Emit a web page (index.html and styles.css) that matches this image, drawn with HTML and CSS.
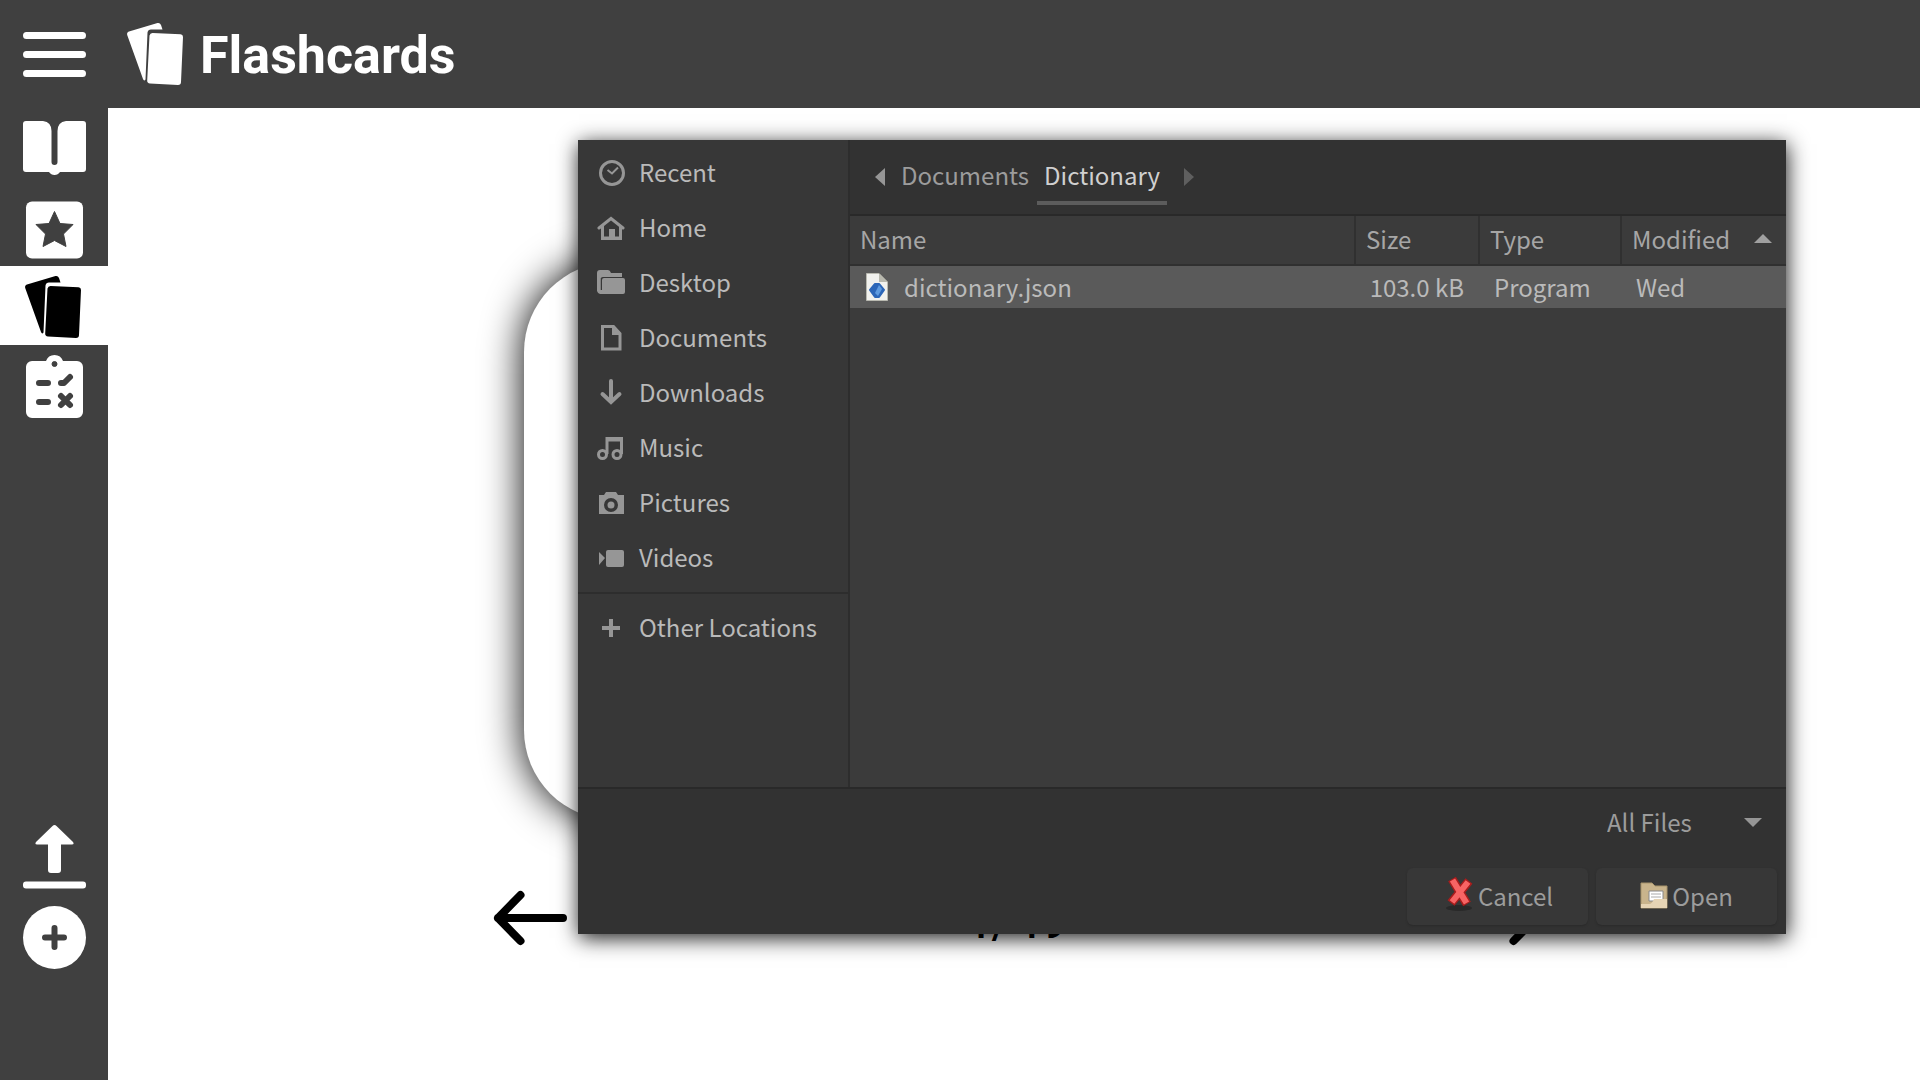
FILE: index.html
```html
<!DOCTYPE html>
<html lang="en">
<head>
<meta charset="utf-8">
<title>Flashcards</title>
<link rel="stylesheet" href="styles.css">
</head>
<body>
<svg class="sprite" aria-hidden="true">
  <symbol id="cards" viewBox="0 0 60 66">
    <path d="M4 10.5 32.500 2Q35 1.500 36 4L37.500 8.500H26Q23 8.500 22.500 11.500L20.500 58.500Q19 60.500 18 58L2.200 14Q1.500 11.500 4 10.500Z"/>
    <path d="M27.500 12 55.500 13.200Q58 13.500 58 16L56 61Q56 64 53 64L25 62.500Q22 62 22.200 59.500L24.500 14.500Q25 12 27.500 12Z"/>
  </symbol>
</svg>
<div class="app">
  <header class="topbar">
    <button class="menu" aria-label="Menu"><svg width="63" height="45"><path d="M3.500 3.500h56M3.500 22.500h56M3.500 41.500h56" fill="none" stroke="#fff" stroke-width="7" stroke-linecap="round"/></svg></button>
    <svg class="logo" width="60" height="66"><use href="#cards"/></svg>
    <h1>Flashcards</h1>
  </header>
  <div class="body">
    <nav class="rail">
      <button class="tool" aria-label="Dictionary"><svg width="108" height="79"><path d="M26 13H43Q51.500 14 51.500 23V54a3 3 0 0 0 6 0V23Q57.500 14 66 13H83a3 3 0 0 1 3 3V61a3 3 0 0 1-3 3H60Q58 67 54.500 67T49 64H26a3 3 0 0 1-3-3V16a3 3 0 0 1 3-3Z"/></svg></button>
      <button class="tool" aria-label="Favourites"><svg width="108" height="79"><rect x="26" y="14.500" width="57" height="57" rx="6"/><path class="cut" d="M54.500 24.500 60 36.500 73 37.500 63.500 47 66 59.500 54.500 53.500 43 59.500 45.500 47 36 37.500 49 36.500Z"/></svg></button>
      <button class="tool current" aria-label="Flashcards"><svg width="60" height="66"><use href="#cards"/></svg></button>
      <button class="tool" aria-label="Quiz"><svg width="108" height="79"><path d="M32 16H46a9 9 0 0 1 17 0H77a6 6 0 0 1 6 6V67a6 6 0 0 1-6 6H32a6 6 0 0 1-6-6V22a6 6 0 0 1 6-6Z"/><circle class="cut" cx="54.500" cy="19" r="2.500"/><path class="line" d="M39 38h9M39 57h9M61 38h3L70 32M61 51l9 9M70 51l-9 9"/></svg></button>
      <button class="tool push" aria-label="Upload"><svg width="108" height="79"><path d="M52.500 8Q54.500 6 56.500 8L73 24Q74.500 26.500 72 26.500H61V52a3 3 0 0 1-3 3H51a3 3 0 0 1-3-3V26.500H37Q34.500 26.500 36 24Z"/><rect x="23" y="63.500" width="63" height="7" rx="3"/></svg></button>
      <button class="tool" aria-label="Add"><svg width="108" height="79"><circle cx="54.500" cy="40.500" r="31.500"/><path class="line" d="M54.500 31v19M45 40.500h19"/></svg></button>
    </nav>
    <main class="stage">
      <section class="card"></section>
      <div class="pager">
        <button aria-label="Previous"><svg width="74" height="56"><path d="M70 28H5M27.500 5 5 28 27.500 51"/></svg></button>
        <p>1/ 19</p>
        <button aria-label="Next"><svg width="74" height="56"><path d="M4 28H69M46.500 5 69 28 46.500 51"/></svg></button>
      </div>
    </main>
  </div>
</div>

<div class="dialog" role="dialog" aria-label="Open file">
  <div class="browser">
    <nav class="places">
      <a href="#"><svg viewBox="0 0 28 28"><circle class="o" cx="15" cy="14" r="11.500"/><path class="o thin" d="M10.500 11l4.500 3.500 6-6"/></svg>Recent</a>
      <a href="#"><svg viewBox="0 0 28 28"><path class="o" stroke-linecap="round" d="M2 14 14 4.500 26 14"/><path d="M4 13v13h21V13l-3-2v11.500h-4V15h-6v7.500H7V11Z"/></svg>Home</a>
      <a href="#"><svg viewBox="0 0 28 28"><path d="M0 4q0-3 3-3h8q2 0 3 3h11v4H6Q3.500 8 3.500 11v10H2q-2 0-2-2Z"/><path d="M5 11q0-2 2-2h19q2 0 2 2v12q0 2-2 2H3q-2 0-3-3V10h3.500v11H5Z"/></svg>Desktop</a>
      <a href="#"><svg viewBox="0 0 28 28"><path class="o" d="M5.500 2.500h11l6.500 7v15.500H5.500Z"/><path d="M15 2v9h9Z"/></svg>Documents</a>
      <a href="#"><svg viewBox="0 0 28 28"><path class="o thick" d="M14 2V23M5.500 15l8.500 8 8.500-8" stroke-linecap="round"/></svg>Downloads</a>
      <a href="#"><svg viewBox="0 0 28 28"><path class="o" d="M10 20V4.500h14.500V20M10 6h14"/><circle class="o" cx="5.500" cy="20.500" r="4"/><circle class="o" cx="20" cy="20.500" r="4"/></svg>Music</a>
      <a href="#"><svg viewBox="0 0 28 28"><path fill-rule="evenodd" d="M2 6h5l2-3h10l2 3h6v19H2ZM14 9a7 7 0 1 0 0 14a7 7 0 0 0 0-14Z"/><circle cx="14" cy="16" r="3.500"/></svg>Pictures</a>
      <a href="#"><svg viewBox="0 0 28 28"><path d="M2 8 8 14 2 21Z"/><rect x="9" y="6" width="18" height="17" rx="2"/></svg>Videos</a>
      <hr>
      <a href="#"><svg viewBox="0 0 28 28"><path class="o thick" d="M14 5v18M5 14h18"/></svg>Other Locations</a>
    </nav>
    <section class="listing">
      <div class="path">
        <button class="step" aria-label="Back"><svg width="10" height="18"><path d="M10 0v18L0 9Z"/></svg></button>
        <a href="#">Documents</a>
        <a href="#" class="here">Dictionary</a>
        <button class="step next" aria-label="Forward"><svg width="10" height="18"><path d="M0 0v18L10 9Z"/></svg></button>
      </div>
      <table>
        <colgroup><col><col class="c-size"><col class="c-type"><col class="c-mod"></colgroup>
        <thead><tr><th>Name</th><th>Size</th><th>Type</th><th><span class="sort">Modified<svg width="18" height="9"><path d="M0 9 9 0l9 9Z"/></svg></span></th></tr></thead>
        <tbody><tr>
          <td><span class="file"><svg width="22" height="28"><path d="M.5.500H13L21.500 9v18.500H.5Z" fill="#f1f1ee" stroke="#b9b9b0"/><path d="M13 .5V9h8.500Z" fill="#b8b8ae"/><path d="m4 17 5-6h4l5 6-5 7H9Z" fill="#2c66b8" stroke="#2c66b8" stroke-width="2" stroke-linejoin="round"/><path d="m9 20 4-8 3 4-4 7Z" fill="#5f9be0"/></svg>dictionary.json</span></td>
          <td class="num">103.0 kB</td><td>Program</td><td>Wed</td>
        </tr></tbody>
      </table>
    </section>
  </div>
  <footer class="actions">
    <label class="filter"><select aria-label="File type"><option>All Files</option></select><svg width="18" height="9"><path d="M0 0h18L9 9Z"/></svg></label>
    <div class="buttons">
      <button class="cancel"><svg width="28" height="36"><ellipse cx="13" cy="32" rx="13" ry="3" fill="#292929"/><path d="M6 3 21 28M23 5 5 27" stroke="#a81c1c" stroke-width="9" fill="none"/><path d="M6.500 4 20.500 27M22 6 6 26" stroke="#f76464" stroke-width="6" fill="none"/></svg>Cancel</button>
      <button><svg width="28" height="28"><path d="M1 1h11l3 3h12v22H1Z" fill="#c9b48c" stroke="#a8946c"/><path d="M9 9h14v10H9Z" fill="#fff" stroke="#888"/><path d="M11 12h10M11 15h10" stroke="#aaa"/><path d="M1 22h8q3 0 5-5h13v9H1Z" fill="#e6d4b4"/></svg>Open</button>
    </div>
  </footer>
</div>
</body>
</html>
```
FILE: styles.css
```css
* { box-sizing: border-box; }

body {
  margin: 0;
  background: #fff;
  font-family: Roboto, "Liberation Sans", sans-serif;
}

button {
  margin: 0;
  padding: 0;
  border: 0;
  background: none;
  font: inherit;
  color: inherit;
}

svg { display: block; flex: none; }
.sprite { position: absolute; width: 0; height: 0; }
a { color: inherit; text-decoration: none; }

.app {
  display: flex;
  flex-direction: column;
  min-height: 100vh;
}

.topbar {
  display: flex;
  align-items: center;
  height: 108px;
  background: #404040;
  color: #fff;
}

.menu { display: flex; justify-content: center; width: 108px; }
.logo { margin: 0 15px 0 17px; fill: #fff; }
.topbar h1 { margin: 0; padding-top: 3px; font-size: 52px; line-height: 60px; font-weight: 700; }

.body { display: flex; flex: 1; }

.rail {
  display: flex;
  flex-direction: column;
  width: 108px;
  padding-bottom: 104px;
  background: #404040;
}
.tool {
  display: flex;
  align-items: center;
  justify-content: center;
  height: 79px;
  fill: #fff;
}
.tool.current { padding: 2px 2px 0 0; background: #fff; fill: #000; }
.tool.push { margin-top: auto; }
.cut { fill: #404040; stroke: #404040; stroke-width: 1; stroke-linejoin: round; }
.line { fill: none; stroke: #404040; stroke-width: 6; stroke-linecap: round; stroke-linejoin: round; }

.stage {
  display: flex;
  flex: 1;
  flex-direction: column;
  align-items: center;
  padding: 154px 0 0 6px;
}
.card {
  width: 986px;
  height: 558px;
  border-radius: 90px;
  background: #fff;
  box-shadow: 0 0 40px #000;
}
.pager {
  display: flex;
  align-items: flex-end;
  justify-content: space-between;
  width: 1048px;
  margin-top: 70px;
}
.pager p { margin: 0; font-size: 42px; line-height: 44px; font-weight: 500; }
.pager path {
  fill: none;
  stroke: #000;
  stroke-width: 8;
  stroke-linecap: round;
  stroke-linejoin: round;
}

.dialog {
  position: absolute;
  top: 140px;
  right: 134px;
  left: 578px;
  background: #323232;
  box-shadow: 1px 4px 20px rgba(0, 0, 0, .9);
  color: #bababa;
  font: 24px/36px "Noto Sans CJK SC", "Noto Sans", sans-serif;
}

.browser {
  display: flex;
  min-height: 649px;
  border-bottom: 2px solid #292929;
}

.places {
  width: 272px;
  padding-top: 5px;
  border-right: 2px solid #2d2d2d;
  background: #373737;
}
.places a {
  display: flex;
  align-items: center;
  gap: 14px;
  height: 55px;
  padding: 0 0 2px 19px;
}
.places svg { width: 28px; height: 28px; margin-top: 2px; fill: #969696; }
.places .o { fill: none; stroke: #969696; stroke-width: 3; }
.places .thin { stroke-width: 2; }
.places .thick { stroke-width: 4; }
.places hr { height: 2px; margin: 7px 0 6px; border: 0; background: #2d2d2d; }

.listing { flex: 1; background: #3b3b3b; }
.path {
  display: flex;
  align-items: center;
  height: 76px;
  padding: 0 25px;
  border-bottom: 2px solid #292929;
  background: #323232;
  color: #9c9c9c;
}
.path a { height: 56px; padding: 8px 7px 0; }
.path a:first-of-type { margin: 0 1px 0 9px; }
.path .here { border-bottom: 4px solid #5c5c5c; color: #d0d0d0; }
.step { fill: #969696; }
.step.next { margin-left: 17px; fill: #5f5f5f; }

table { width: 100%; border-collapse: collapse; table-layout: fixed; }
.c-size { width: 124px; }
.c-type { width: 142px; }
.c-mod { width: 165px; }
th {
  height: 49px;
  padding: 0 10px 3px;
  border-bottom: 2px solid #303030;
  color: #a6a6a6;
  font-weight: 400;
  text-align: left;
}
th + th { border-left: 2px solid #303030; }
td { height: 43px; padding: 0 15px 1px; background: #5a5a5a; }
.num { padding-left: 0; text-align: right; }
.sort { display: flex; align-items: center; gap: 24px; fill: #a0a0a0; }
.file { display: flex; align-items: center; gap: 16px; padding-left: 1px; }

.actions {
  display: flex;
  flex-direction: column;
  align-items: flex-end;
  gap: 28px;
  padding: 15px 9px 9px;
  color: #9c9c9c;
}
.filter { display: flex; align-items: center; padding-right: 15px; fill: #969696; }
select {
  width: 137px;
  height: 36px;
  padding: 0;
  border: 0;
  background: none;
  color: inherit;
  font: inherit;
  appearance: none;
}
.buttons { display: flex; gap: 8px; }
.buttons button {
  display: flex;
  align-items: center;
  justify-content: center;
  gap: 4px;
  width: 181px;
  height: 57px;
  padding-bottom: 2px;
  border-radius: 6px;
  background: #373737;
  box-shadow: 0 1px 2px #2a2a2a;
}
.buttons .cancel { padding-left: 4px; }
.cancel svg { margin-bottom: 4px; }
```
